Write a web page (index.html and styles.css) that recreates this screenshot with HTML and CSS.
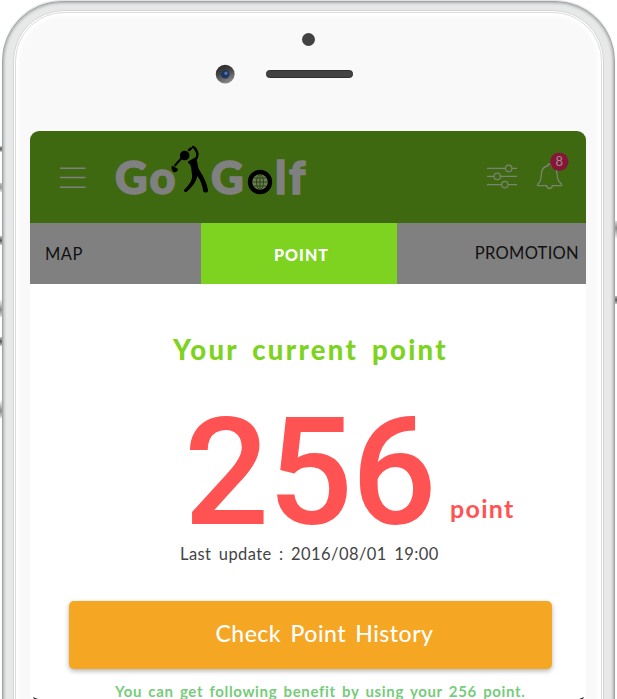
FILE: index.html
```
<!DOCTYPE html>
<html lang="en">
<head>
<meta charset="utf-8">
<title>Go Golf</title>
<link rel="stylesheet" href="styles.css">
</head>
<body>
<main class="stage">
  <i class="cap cap-1"></i><i class="cap cap-2"></i><i class="cap cap-3"></i><i class="cap cap-4"></i><i class="cap cap-5"></i><i class="cap cap-6"></i><i class="cap cap-7"></i><i class="cap cap-8"></i>
  <div class="phone">
    <div class="bezel">
      <div class="face">
        <svg class="sensors" width="556" height="112" viewBox="30 19 556 112">
          <defs>
            <linearGradient id="lens" x1="0" y1="0" x2=".4" y2="1"><stop offset="0" stop-color="#222"/><stop offset=".5" stop-color="#444"/><stop offset="1" stop-color="#858585"/></linearGradient>
          </defs>
          <circle cx="308.500" cy="39.500" r="6.500" fill="#434343"/>
          <circle cx="225.200" cy="74.200" r="9.400" fill="url(#lens)"/>
          <circle cx="225.200" cy="74.200" r="4.200" fill="#1d3563"/>
          <circle cx="226" cy="73.300" r="1.700" fill="#5274a5"/>
          <rect x="266.500" y="70.500" width="86" height="7" rx="3" fill="#434343" stroke="#303030"/>
        </svg>
        <section class="screen">
          <header class="topbar">
            <svg class="menu" width="26" height="22" viewBox="0 0 26 22" stroke="#808080" stroke-width="1.500"><path d="M0 1.300H25.500M0 10.500H25.500M0 20.200H25.500"/></svg>
            <svg class="logo" width="200" height="72" viewBox="110 134 200 72">
              <g class="logo-text">
                <text x="115 149.500" y="193.500">Go</text>
                <text x="211" y="193.500">G</text>
                <text x="275 289" y="193.500">lf</text>
              </g>
              <circle cx="184.700" cy="155.500" r="4.800"/>
              <path d="M189 150L191 148.500M193 147Q196 148 197.500 154Q197.500 158 194.500 161.500" fill="none" stroke="#000" stroke-width="2.400" stroke-linejoin="round" stroke-linecap="round"/>
              <path d="M188 161.500L195 157.500C199 163 196.500 166 200 171C204 177 207 184 208 190Q208 193 205.500 192.500Q203 192.500 203 190C202 184 200 179 197 176C197 181 192 187 187 191.500Q184 193 184 190C189 185 193 180 192 174C191 169 192 165 188 163Z"/>
              <path d="M182.500 157L174.500 166" fill="none" stroke="#000" stroke-width="2"/>
              <path d="M172 165.500L178 169Q177 173 173.500 172Q170.500 169 172 165.500Z"/>
              <circle cx="260" cy="182" r="10" fill="#3f6910" stroke="#000" stroke-width="4.400"/>
              <circle cx="260" cy="182" r="7.500" fill="#687c55"/>
              <g fill="none" stroke="#28410e" stroke-width=".9"><ellipse cx="260" cy="182" rx="3.500" ry="7.500"/><path d="M260 174.500V189.500M252.500 182H267.500M254 178H266M254 186H266"/></g>
            </svg>
            <svg class="filters" width="30" height="26" viewBox="487 164 30 26" fill="none" stroke="#7c8375" stroke-width="1.200"><path d="M487 168.400H505.200M512 168.400H517M487 176.400H494M500.400 176.400H517M487 184.600H501.500M508 184.600H517"/><circle cx="508.700" cy="168.400" r="3.200"/><circle cx="497.200" cy="176.400" r="3.200"/><circle cx="504.800" cy="184.600" r="3.200"/></svg>
            <svg class="bell" width="34" height="40" viewBox="536 151 34 40"><path d="M546.500 185.700H538Q536.500 184.500 539 183C541 181 541 177 541.500 173C542 169 544 166.500 547.500 166Q547.500 164 549.500 164T551.500 166C555 167 557 170 557 174C557.300 178 558 181 560.500 183Q562.500 185 561 185.700H552.500Q551.500 188.500 549.500 188.500T546.500 185.700Z" fill="none" stroke="#7c8375" stroke-width="1.300"/><circle cx="559.300" cy="161.700" r="9.200" fill="#861637"/><text class="count" x="559.300" y="166.300" text-anchor="middle">8</text></svg>
          </header>
          <nav class="tabs">
            <a class="tab tab-map">MAP</a>
            <a class="tab tab-point">POINT</a>
            <a class="tab tab-promo">PROMOTION</a>
          </nav>
          <div class="content">
            <h1 class="title">Your current point</h1>
            <div class="score"><span class="value">256</span><span class="unit">point</span></div>
            <p class="updated">Last update : 2016/08/01 19:00</p>
            <button class="history">Check Point History</button>
            <p class="benefit">You can get following benefit by using your 256 point.</p>
          </div>
        </section>
      </div>
    </div>
  </div>
  <i class="nick nick-left"></i><i class="nick nick-right"></i>
</main>
</body>
</html>
```
FILE: styles.css
```
* { box-sizing: border-box; }
body { margin: 0; overflow: hidden; background: #fff; font-family: Lato, "Liberation Sans", sans-serif; }
.stage { position: relative; width: 617px; height: 699px; overflow: hidden; }
.phone {
  position: relative; width: 613px; height: 900px; margin: 1px 0 0 2px; padding: 8px 10px;
  border-radius: 60px; border: 1px solid #a2a5a7;
  background: #e7e8e8;
  box-shadow: inset 0 0 3px 1px #a5a8aa, 0 -1px 1px #e1e3e3;
}
.bezel { height: 880px; border-radius: 51px; padding: 1px 1px; background: #fff; border: 1px solid #d4d5d5; }
.face { height: 870px; border-radius: 49px; background: #f9f9f9; border: 1px solid #dcdcdc; padding: 6px 14px; box-shadow: inset 0 0 4px 3px #fff; }
.sensors { display: block; }
.screen { width: 556px; height: 572px; border-radius: 9px; overflow: hidden; background: #fff; }
.topbar { display: flex; height: 92px; background: #3f6910; }
.menu { margin: 36px 0 0 30px; }
.logo { margin: 3px 0 0 24px; }
.logo-text { font-family: Lato, sans-serif; font-weight: 900; font-size: 45px; fill: #808080; stroke: #808080; stroke-width: 1.5px; }
.filters { margin: 33px 0 0 177px; }
.bell { margin: 20px 0 0 19px; }
.count { font: 13px Lato, sans-serif; fill: #a18b92; }
.tabs { display: flex; height: 61px; background: #808080; }
.tab { display: flex; align-items: center; font-size: 16.5px; color: #111; white-space: nowrap; }
.tab-map { width: 171px; padding-left: 15px; letter-spacing: .5px; }
.tab-point { width: 196px; padding: 1px 0 0 5px; justify-content: center; background: #7ed321; color: #fff; font-weight: 900; font-size: 16px; letter-spacing: 1px; }
.tab-promo { width: 189px; padding: 0 7px 1px 0; justify-content: flex-end; letter-spacing: .3px; }
.content { padding-left: 39px; white-space: nowrap; }
.title { margin: 49px 0 0 104px; height: 34px; line-height: 34px; font-size: 27.5px; font-weight: 900; letter-spacing: 2.300px; word-spacing: 5px; color: #7ed321; }
.score { display: flex; align-items: baseline; height: 139px; margin: 37px 0 0 115px; line-height: 139px; color: #ff5252; }
.value { width: 247px; font-family: Roboto, sans-serif; font-size: 150px; font-weight: 500; letter-spacing: -1.5px; }
.unit { position: relative; top: -6px; margin-left: 19px; line-height: 30px; font-size: 25px; font-weight: 700; letter-spacing: 1.3px; }
.updated { margin: -1px 0 0 111px; height: 24px; line-height: 24px; font-size: 16.500px; letter-spacing: .43px; word-spacing: 2.700px; color: #444; }
.history { display: block; width: 483px; height: 68px; margin-top: 35px; padding: 0 0 5px 28px; border: 0; border-radius: 5px; background: #f5a623; box-shadow: 0 2px 5px rgba(0,0,0,.3); color: #fff; font: 500 23px Lato, sans-serif; letter-spacing: .5px; word-spacing: 3px; }
.benefit { margin: 11px 0 0 46px; height: 22px; line-height: 22px; font-size: 15px; font-weight: 700; letter-spacing: .65px; word-spacing: 2px; color: #76cc7a; }
.cap { position: absolute; left: 0; width: 4px; height: 6px; border-radius: 1px; background: linear-gradient(#bbb, #555 50%, #ccc); }
.cap-1 { top: 146px; }
.cap-2 { top: 183px; height: 9px; background: linear-gradient(#bbb, #999 50%, #ddd); }
.cap-3 { top: 236px; height: 9px; }
.cap-4 { top: 299px; height: 18px; background: linear-gradient(#fff, #888 60%, #ddd); }
.cap-5 { top: 337px; height: 9px; }
.cap-6 { top: 400px; height: 18px; background: linear-gradient(#fff, #888 60%, #ddd); }
.cap-7 { left: 614px; top: 221px; height: 18px; background: linear-gradient(#ddd, #888 40%, #fff); }
.cap-8 { left: 614px; top: 296px; height: 8px; }
.nick { position: absolute; top: 697px; width: 5px; height: 2px; background: #333; }
.nick-left { left: 33px; clip-path: polygon(0 0, 100% 100%, 20% 100%); }
.nick-right { left: 579px; clip-path: polygon(100% 0, 80% 100%, 0 100%); }
```
